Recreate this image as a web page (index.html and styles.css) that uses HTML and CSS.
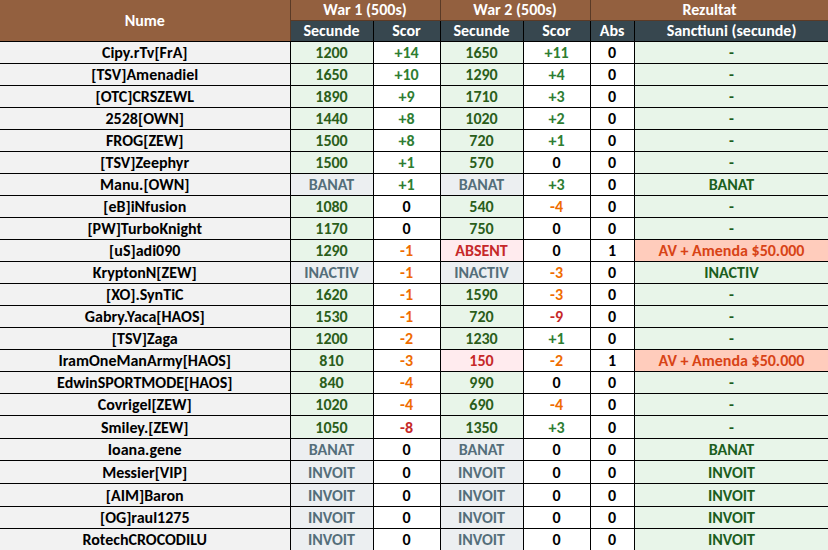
FILE: index.html
```html
<!DOCTYPE html>
<html>
<head>
<meta charset="utf-8">
<link rel="stylesheet" href="styles.css">
</head>
<body>
<table class="sheet">
  <colgroup>
    <col class="c-name"><col class="c-sec"><col class="c-scor"><col class="c-sec"><col class="c-scor"><col class="c-abs"><col class="c-sanc">
  </colgroup>
  <thead>
    <tr class="h1">
      <th rowspan="2" class="h-name">Nume</th>
      <th colspan="2">War 1 (500s)</th>
      <th colspan="2">War 2 (500s)</th>
      <th colspan="2">Rezultat</th>
    </tr>
    <tr class="h2">
      <th>Secunde</th><th>Scor</th><th>Secunde</th><th>Scor</th><th>Abs</th><th>Sanctiuni (secunde)</th>
    </tr>
  </thead>
  <tbody>
    <tr><td class="name">Cipy.rTv[FrA]</td><td class="sec">1200</td><td class="pos">+14</td><td class="sec">1650</td><td class="pos">+11</td><td class="abs">0</td><td class="sanc">-</td></tr>
    <tr><td class="name">[TSV]Amenadiel</td><td class="sec">1650</td><td class="pos">+10</td><td class="sec">1290</td><td class="pos">+4</td><td class="abs">0</td><td class="sanc">-</td></tr>
    <tr><td class="name">[OTC]CRSZEWL</td><td class="sec">1890</td><td class="pos">+9</td><td class="sec">1710</td><td class="pos">+3</td><td class="abs">0</td><td class="sanc">-</td></tr>
    <tr><td class="name">2528[OWN]</td><td class="sec">1440</td><td class="pos">+8</td><td class="sec">1020</td><td class="pos">+2</td><td class="abs">0</td><td class="sanc">-</td></tr>
    <tr><td class="name">FROG[ZEW]</td><td class="sec">1500</td><td class="pos">+8</td><td class="sec">720</td><td class="pos">+1</td><td class="abs">0</td><td class="sanc">-</td></tr>
    <tr><td class="name">[TSV]Zeephyr</td><td class="sec">1500</td><td class="pos">+1</td><td class="sec">570</td><td class="zero">0</td><td class="abs">0</td><td class="sanc">-</td></tr>
    <tr><td class="name">Manu.[OWN]</td><td class="stat">BANAT</td><td class="pos">+1</td><td class="stat">BANAT</td><td class="pos">+3</td><td class="abs">0</td><td class="sanc">BANAT</td></tr>
    <tr><td class="name">[eB]iNfusion</td><td class="sec">1080</td><td class="zero">0</td><td class="sec">540</td><td class="neg">-4</td><td class="abs">0</td><td class="sanc">-</td></tr>
    <tr><td class="name">[PW]TurboKnight</td><td class="sec">1170</td><td class="zero">0</td><td class="sec">750</td><td class="zero">0</td><td class="abs">0</td><td class="sanc">-</td></tr>
    <tr><td class="name">[uS]adi090</td><td class="sec">1290</td><td class="neg">-1</td><td class="absent">ABSENT</td><td class="zero">0</td><td class="abs">1</td><td class="fine">AV + Amenda $50.000</td></tr>
    <tr><td class="name">KryptonN[ZEW]</td><td class="stat">INACTIV</td><td class="neg">-1</td><td class="stat">INACTIV</td><td class="neg">-3</td><td class="abs">0</td><td class="sanc">INACTIV</td></tr>
    <tr><td class="name">[XO].SynTiC</td><td class="sec">1620</td><td class="neg">-1</td><td class="sec">1590</td><td class="neg">-3</td><td class="abs">0</td><td class="sanc">-</td></tr>
    <tr><td class="name">Gabry.Yaca[HAOS]</td><td class="sec">1530</td><td class="neg">-1</td><td class="sec">720</td><td class="bad">-9</td><td class="abs">0</td><td class="sanc">-</td></tr>
    <tr><td class="name">[TSV]Zaga</td><td class="sec">1200</td><td class="neg">-2</td><td class="sec">1230</td><td class="pos">+1</td><td class="abs">0</td><td class="sanc">-</td></tr>
    <tr><td class="name">IramOneManArmy[HAOS]</td><td class="sec">810</td><td class="neg">-3</td><td class="absent">150</td><td class="neg">-2</td><td class="abs">1</td><td class="fine">AV + Amenda $50.000</td></tr>
    <tr><td class="name">EdwinSPORTMODE[HAOS]</td><td class="sec">840</td><td class="neg">-4</td><td class="sec">990</td><td class="zero">0</td><td class="abs">0</td><td class="sanc">-</td></tr>
    <tr><td class="name">Covrigel[ZEW]</td><td class="sec">1020</td><td class="neg">-4</td><td class="sec">690</td><td class="neg">-4</td><td class="abs">0</td><td class="sanc">-</td></tr>
    <tr class="tall"><td class="name">Smiley.[ZEW]</td><td class="sec">1050</td><td class="bad">-8</td><td class="sec">1350</td><td class="pos">+3</td><td class="abs">0</td><td class="sanc">-</td></tr>
    <tr><td class="name">Ioana.gene</td><td class="stat">BANAT</td><td class="zero">0</td><td class="stat">BANAT</td><td class="zero">0</td><td class="abs">0</td><td class="sanc">BANAT</td></tr>
    <tr class="tall"><td class="name">Messier[VIP]</td><td class="stat">INVOIT</td><td class="zero">0</td><td class="stat">INVOIT</td><td class="zero">0</td><td class="abs">0</td><td class="sanc">INVOIT</td></tr>
    <tr class="tall"><td class="name">[AIM]Baron</td><td class="stat">INVOIT</td><td class="zero">0</td><td class="stat">INVOIT</td><td class="zero">0</td><td class="abs">0</td><td class="sanc">INVOIT</td></tr>
    <tr><td class="name">[OG]raul1275</td><td class="stat">INVOIT</td><td class="zero">0</td><td class="stat">INVOIT</td><td class="zero">0</td><td class="abs">0</td><td class="sanc">INVOIT</td></tr>
    <tr><td class="name">RotechCROCODILU</td><td class="stat">INVOIT</td><td class="zero">0</td><td class="stat">INVOIT</td><td class="zero">0</td><td class="abs">0</td><td class="sanc">INVOIT</td></tr>
  </tbody>
</table>
</body>
</html>
```

FILE: styles.css
```css
html, body {
  margin: 0;
  padding: 0;
  background: #ffffff;
}

body {
  width: 828px;
  height: 550px;
  overflow: hidden;
  font-family: Calibri, Carlito, Lato, "Liberation Sans", sans-serif;
  font-weight: 700;
  font-size: 16px;
}

.sheet {
  border-collapse: collapse;
  table-layout: fixed;
  width: 829px;
}

.c-name { width: 290px; }
.c-sec { width: 83px; }
.c-scor { width: 67px; }
.c-abs { width: 44px; }
.c-sanc { width: 195px; }

.sheet th,
.sheet td {
  border: 1px solid #000;
  padding: 0;
  text-align: center;
  vertical-align: middle;
  white-space: nowrap;
  overflow: hidden;
  line-height: 20px;
}

.sheet tr > :first-child { border-left: 0; }

.h1 th {
  background: #93603f;
  color: #ffffff;
  height: 20px;
  border-top: 0;
  border-color: #5a3a26;
}

.h1 th.h-name {
  border-bottom: 1px solid #000;
}

.h2 th {
  background: #37474f;
  color: #ffffff;
  height: 20px;
  border-color: #000;
}

.sheet td { height: 20px; padding-top: 1px; }
.sheet tr.tall td { height: 21px; }

.name { background: #f2f2f2; color: #000; }
.sec { background: #e8f5e9; color: #2a5e1a; }
.stat { background: #eceff1; color: #546e7a; }
.absent { background: #ffebee; color: #c62828; }
.pos { background: #fff; color: #2e7d32; }
.neg { background: #fff; color: #ef6c00; }
.bad { background: #fff; color: #c62828; }
.zero { background: #fff; color: #000; }
.abs { background: #fff; color: #000; }
.sanc { background: #e8f5e9; color: #1b5e20; }
.fine { background: #ffccbc; color: #d84315; }
```
